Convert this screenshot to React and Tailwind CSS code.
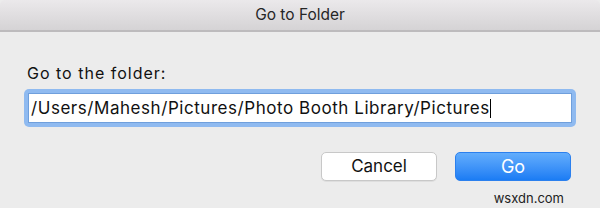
import React from 'react';

export default function App() {
    return (
        <div className="w-[600px] h-[208px] bg-[#ececec] flex flex-col overflow-hidden" style={{ fontFamily: 'Inter, "Liberation Sans", Arial, sans-serif' }}>
            {/* Title bar */}
            <div className="h-[32px] flex items-center justify-center bg-gradient-to-b from-[#ebe9eb] to-[#d5d3d5] border-b-2 border-[#bdbbbd] rounded-t-[5px]">
                <span className="text-[15.5px] text-[#262626] leading-none">Go to Folder</span>
            </div>

            {/* Body */}
            <div className="flex-1 flex flex-col px-[24px] pt-[33px]">
                <label className="text-[16px] text-[#111] leading-none pl-[3px] tracking-[1px]">Go to the folder:</label>
                <div className="mt-[8px] w-[552px] h-[38px] rounded-[5px] bg-[#8fbaf0] p-[4px]">
                    <div className="h-full bg-white border border-[#6f9fdc] flex items-center pl-[2px]">
                        <span className="text-[17px] text-[#111] leading-none tracking-[0.55px]">/Users/Mahesh/Pictures/Photo Booth Library/Pictures</span>
                        <span className="w-px h-[19px] bg-black"></span>
                    </div>
                </div>

                <div className="flex justify-end gap-[18px] mt-[25px] pr-[5px]">
                    <button className="w-[116px] h-[29px] rounded-[5px] bg-white border border-[#c8c8c8] shadow-[0_1px_0_rgba(0,0,0,0.06)] text-[17px] text-[#111] leading-none">Cancel</button>
                    <button className="w-[116px] h-[29px] rounded-[5px] bg-gradient-to-b from-[#62adfc] to-[#1a7cf4] border border-[#2b80ee] text-[18px] text-white leading-none">Go</button>
                </div>
                <div className="flex justify-end pr-[12px] mt-[11px]">
                    <span className="text-[13px] text-[#222] leading-none">wsxdn.com</span>
                </div>
            </div>
        </div>
    );
}
